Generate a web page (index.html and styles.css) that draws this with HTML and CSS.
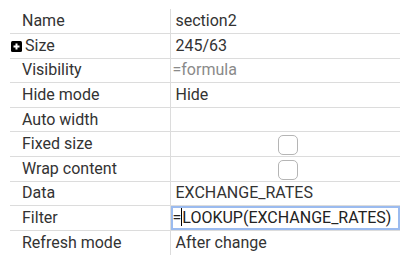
FILE: index.html
```html
<!DOCTYPE html>
<html lang="en">
<head>
    <meta charset="UTF-8">
    <title>Properties</title>
    <link rel="stylesheet" href="styles.css">
</head>
<body>
    <div class="panel">
        <table class="props">
            <tr><td class="label">Name</td><td class="value">section2</td></tr>
            <tr>
                <td class="label has-icon">
                    <svg class="expand" width="11" height="11" viewBox="0 0 11 11">
                        <rect x="0" y="0" width="11" height="11" rx="1.5" fill="#000"/>
                        <path d="M5.5 2.5v6M2.5 5.5h6" stroke="#fff" stroke-width="2"/>
                    </svg>Size
                </td>
                <td class="value">245/63</td>
            </tr>
            <tr><td class="label">Visibility</td><td class="value placeholder">=formula</td></tr>
            <tr><td class="label">Hide mode</td><td class="value">Hide</td></tr>
            <tr><td class="label">Auto width</td><td class="value"></td></tr>
            <tr><td class="label">Fixed size</td><td class="value check"><span class="box"></span></td></tr>
            <tr><td class="label">Wrap content</td><td class="value check"><span class="box"></span></td></tr>
            <tr><td class="label">Data</td><td class="value">EXCHANGE_RATES</td></tr>
            <tr><td class="label">Filter</td><td class="value editing">=<span class="caret"></span>LOOKUP(EXCHANGE_RATES)</td></tr>
            <tr><td class="label">Refresh mode</td><td class="value">After change</td></tr>
        </table>
    </div>
</body>
</html>
```

FILE: styles.css
```css
*{
    box-sizing: border-box;
}
body{
    margin: 9px 8px 0 10px;
    background: #fff;
    font-family: Roboto, "Liberation Sans", sans-serif;
    font-size: 16px;
    color: #333;
}
.panel{
    width: 390px;
    background: #fff;
    box-shadow: 0 2px 9px rgba(0, 0, 0, 0.35);
}
.props{
    width: 100%;
    border-collapse: collapse;
    table-layout: fixed;
}
.props td{
    height: 24.6px;
    padding: 0;
    border: 1px solid #dcdcdc;
    line-height: 22px;
    white-space: nowrap;
    overflow: hidden;
}
.props tr:first-child td{
    border-top: none;
}
.props tr:last-child td{
    border-bottom: none;
}
.props td:first-child{
    border-left: none;
}
.props td:last-child{
    border-right: none;
}
.label{
    width: 160px;
    padding-left: 12px !important;
}
.label.has-icon{
    padding-left: 1px !important;
}
.expand{
    vertical-align: -1px;
    margin-right: 3px;
}
.value{
    padding-left: 5px !important;
}
.value.placeholder{
    padding-left: 2px !important;
    color: #8a8a8a;
}
.check{
    text-align: center;
}
.box{
    display: inline-block;
    width: 20px;
    height: 20px;
    border: 1px solid #b5b5b5;
    border-radius: 5px;
    vertical-align: middle;
}
.editing{
    padding-left: 2px !important;
    box-shadow: inset 0 0 0 2px #9bbbef;
    color: #222;
}
.caret{
    display: inline-block;
    width: 1px;
    height: 18px;
    background: #000;
    vertical-align: -3px;
}
```
